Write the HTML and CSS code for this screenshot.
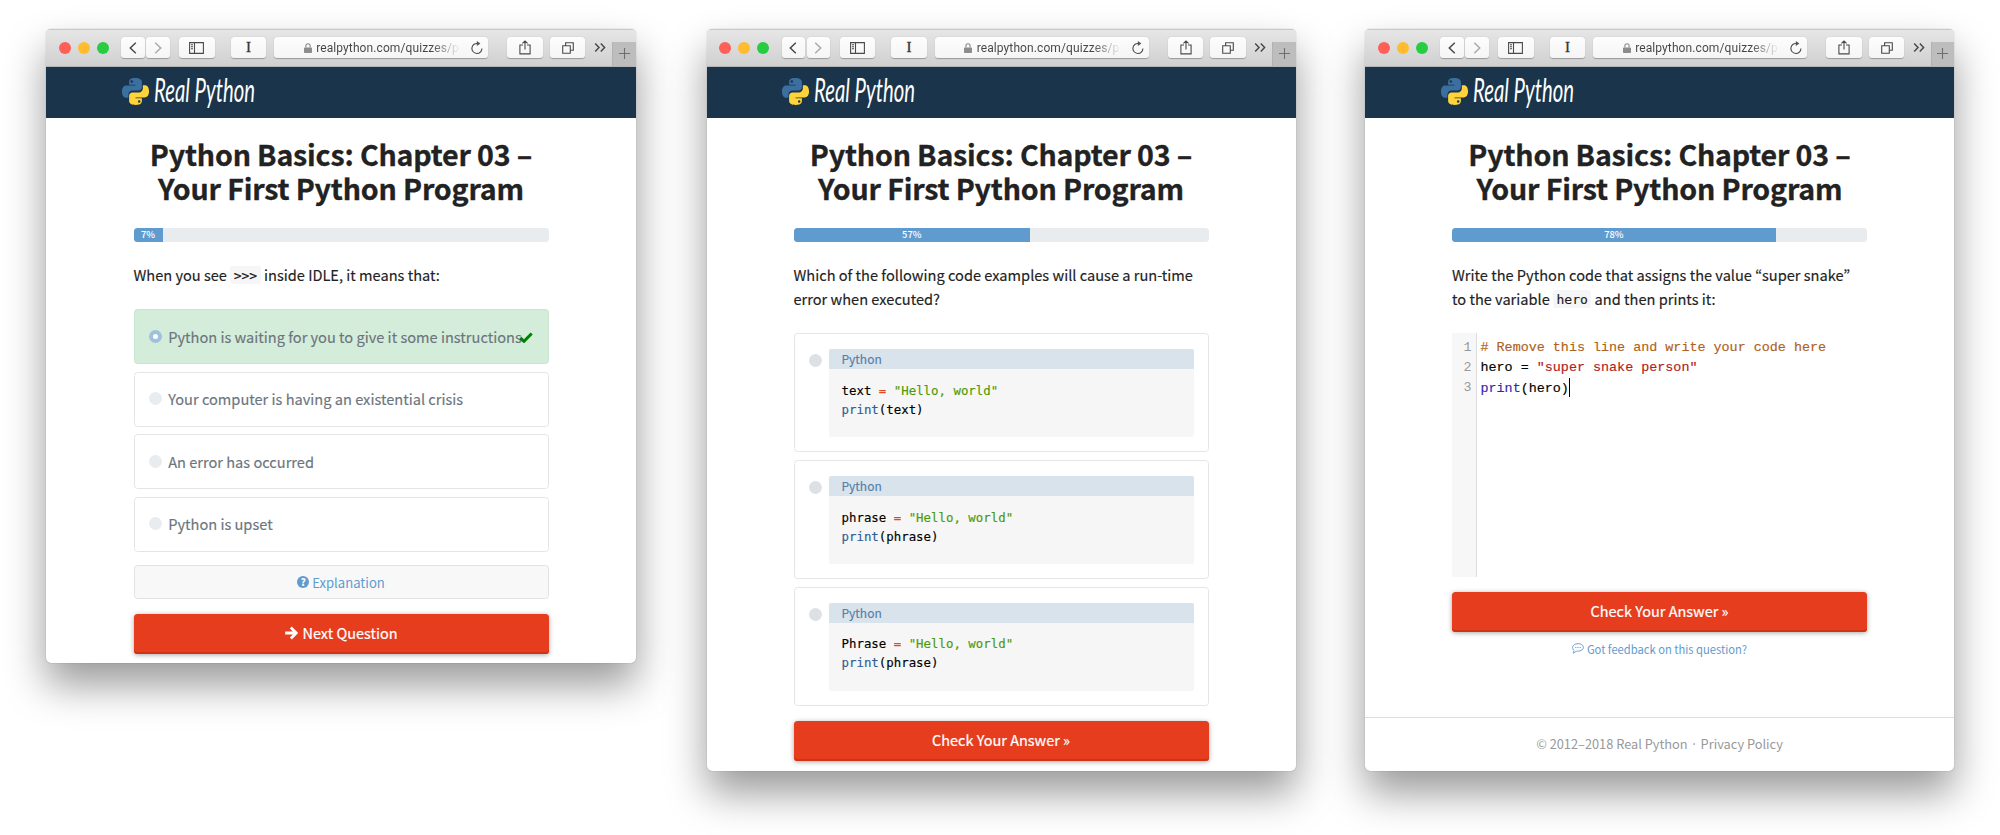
FILE: index.html
```html
<!DOCTYPE html>
<html lang="en">
<head>
  <meta charset="UTF-8" />
  <meta name="viewport" content="width=device-width, initial-scale=1.0" />
  <title>Real Python Quizzes</title>
  <link rel="stylesheet" href="styles.css">
</head>
<body>
  <!-- Shared icons -->
  <svg class="sprite" width="0" height="0">
    <symbol id="i-back" viewBox="0 0 8 12"><path d="M6.8 .8 1.3 6l5.5 5.2" /></symbol>
    <symbol id="i-forward" viewBox="0 0 8 12"><path d="M1.2 .8 6.7 6l-5.5 5.2" /></symbol>
    <symbol id="i-sidebar" viewBox="0 0 15 12"><path d="M.6.6h13.8v10.8H.6zM5.5.6v10.8M2 2.8h2M2 4.8h2M2 6.8h2" /></symbol>
    <symbol id="i-share" viewBox="0 0 12 15"><path d="M4 5H.9v8.9h10.2V5H8M6 9.5V1M3.4 3.4 6 .9l2.6 2.5" /></symbol>
    <symbol id="i-tabs" viewBox="0 0 12 12"><path d="M.7 3.7h7.6v7.6H.7zM3.6 3.5V.7h7.7v7.6H8.5" /></symbol>
    <symbol id="i-more" viewBox="0 0 12 9"><path d="M1.2.6 5 4.5 1.2 8.4M6.8.6l3.8 3.9-3.8 3.9" /></symbol>
    <symbol id="i-plus" viewBox="0 0 11 11"><path d="M5.5 0v11M0 5.5h11" /></symbol>
    <symbol id="i-reload" viewBox="0 0 12 13"><path d="M10.9 7.4A5 5 0 1 1 6.6 2.5" /><path class="solid" d="M5.8 0 9.4 2.6 5.8 5.1z" /></symbol>
    <symbol id="i-lock" viewBox="0 0 8 10"><path class="solid" d="M.8 4.4h6.4q.8 0 .8.8v4q0 .8-.8.8H.8Q0 10 0 9.2v-4q0-.8.8-.8z" /><path d="M1.9 4.6V2.8a2.1 2.1 0 0 1 4.2 0v1.8" /></symbol>
    <symbol id="i-python" viewBox="0 0 110 110">
      <path fill="#3b6fa0" d="M54 0C32 0 29 9 29 16v11h26v4H18C8 31 0 39 0 55s7 25 16 25h10V67c0-9 8-16 16-16h25c8 0 14-6 14-13V16C81 7 73 0 54 0z" />
      <circle cx="40" cy="14" r="5" fill="#1a354b" />
      <path fill="#ffd43b" d="M56 110c22 0 25-9 25-16V83H55v-4h37c10 0 18-8 18-24s-7-25-16-25H85v13c0 9-8 16-16 16H43c-8 0-14 6-14 13v22c0 9 8 16 27 16z" />
      <circle cx="70" cy="96" r="5" fill="#1a354b" />
    </symbol>
    <symbol id="i-check" viewBox="0 0 14 11"><path d="M1.3 5.8 5 9.3 12.7 1.5" /></symbol>
    <symbol id="i-arrow" viewBox="0 0 14 14"><path d="M1.2 7h10.6M6.8 1.6 12.2 7l-5.4 5.4" /></symbol>
    <symbol id="i-comment" viewBox="0 0 12 11"><path d="M6 .6c3 0 5.4 1.7 5.4 3.8S9 8.2 6 8.2c-.6 0-1.1 0-1.6-.2C3.5 9.2 2.3 9.9 1 10c.6-.7 1-1.5 1.1-2.6C1.2 6.7.6 5.6.6 4.4.6 2.3 3 .6 6 .6zM3.2 4.5h1.2M5.4 4.5h1.2M7.6 4.5h1.2" /></symbol>
  </svg>

  <div class="windows">
    <!-- Multiple choice, answered -->
    <div class="window window-answered">
      <div class="toolbar">
        <div class="lights"><i class="red"></i><i class="yellow"></i><i class="green"></i></div>
        <div class="btn nav-btn"><svg width="8" height="12"><use href="#i-back" /></svg></div>
        <div class="btn nav-btn off"><svg width="8" height="12"><use href="#i-forward" /></svg></div>
        <div class="btn sidebar-btn"><svg width="15" height="12"><use href="#i-sidebar" /></svg></div>
        <div class="btn text-btn">I</div>
        <div class="btn address">
          <svg class="lock" width="8" height="10"><use href="#i-lock" /></svg>
          <span class="url">realpython.com/quizzes/p</span>
          <svg width="12" height="13"><use href="#i-reload" /></svg>
        </div>
        <div class="btn share-btn"><svg width="12" height="15"><use href="#i-share" /></svg></div>
        <div class="btn tabs-btn"><svg width="12" height="12"><use href="#i-tabs" /></svg></div>
        <svg class="more" width="12" height="9"><use href="#i-more" /></svg>
        <div class="new-tab"><svg width="11" height="11"><use href="#i-plus" /></svg></div>
      </div>
      <div class="navbar">
        <svg class="logo" width="27" height="27"><use href="#i-python" /></svg>
        <svg class="wordmark" width="106" height="51"><text x="1" y="35" textLength="101" lengthAdjust="spacingAndGlyphs">Real Python</text></svg>
      </div>
      <div class="content">
        <h1>Python Basics: Chapter 03 – Your First Python Program</h1>
        <div class="progress"><div class="bar" style="width: 7%">7%</div></div>
        <p class="question">When you see <code>&gt;&gt;&gt;</code> inside IDLE, it means that:</p>
        <div class="answers">
          <div class="answer correct"><i class="radio"></i>Python is waiting for you to give it some instructions<svg class="check" width="14" height="11"><use href="#i-check" /></svg></div>
          <div class="answer"><i class="radio"></i>Your computer is having an existential crisis</div>
          <div class="answer"><i class="radio"></i>An error has occurred</div>
          <div class="answer"><i class="radio"></i>Python is upset</div>
        </div>
        <div class="explanation"><i class="help">?</i>Explanation</div>
        <div class="submit"><svg width="14" height="14"><use href="#i-arrow" /></svg>Next Question</div>
      </div>
    </div>

    <!-- Multiple choice with code blocks -->
    <div class="window window-code">
      <div class="toolbar">
        <div class="lights"><i class="red"></i><i class="yellow"></i><i class="green"></i></div>
        <div class="btn nav-btn"><svg width="8" height="12"><use href="#i-back" /></svg></div>
        <div class="btn nav-btn off"><svg width="8" height="12"><use href="#i-forward" /></svg></div>
        <div class="btn sidebar-btn"><svg width="15" height="12"><use href="#i-sidebar" /></svg></div>
        <div class="btn text-btn">I</div>
        <div class="btn address">
          <svg class="lock" width="8" height="10"><use href="#i-lock" /></svg>
          <span class="url">realpython.com/quizzes/p</span>
          <svg width="12" height="13"><use href="#i-reload" /></svg>
        </div>
        <div class="btn share-btn"><svg width="12" height="15"><use href="#i-share" /></svg></div>
        <div class="btn tabs-btn"><svg width="12" height="12"><use href="#i-tabs" /></svg></div>
        <svg class="more" width="12" height="9"><use href="#i-more" /></svg>
        <div class="new-tab"><svg width="11" height="11"><use href="#i-plus" /></svg></div>
      </div>
      <div class="navbar">
        <svg class="logo" width="27" height="27"><use href="#i-python" /></svg>
        <svg class="wordmark" width="106" height="51"><text x="1" y="35" textLength="101" lengthAdjust="spacingAndGlyphs">Real Python</text></svg>
      </div>
      <div class="content">
        <h1>Python Basics: Chapter 03 – Your First Python Program</h1>
        <div class="progress"><div class="bar" style="width: 57%">57%</div></div>
        <p class="question">Which of the following code examples will cause a run-time<br>error when executed?</p>
        <div class="answers">
          <div class="answer code-answer">
            <i class="radio"></i>
            <div class="snippet">
              <div class="lang">Python</div>
<pre>text <b class="op">=</b> <b class="str">"Hello, world"</b>
<b class="fn">print</b>(text)</pre>
            </div>
          </div>
          <div class="answer code-answer">
            <i class="radio"></i>
            <div class="snippet">
              <div class="lang">Python</div>
<pre>phrase <b class="op">=</b> <b class="str">"Hello, world"</b>
<b class="fn">print</b>(phrase)</pre>
            </div>
          </div>
          <div class="answer code-answer">
            <i class="radio"></i>
            <div class="snippet">
              <div class="lang">Python</div>
<pre>Phrase <b class="op">=</b> <b class="str">"Hello, world"</b>
<b class="fn">print</b>(phrase)</pre>
            </div>
          </div>
        </div>
        <div class="submit">Check Your Answer »</div>
      </div>
    </div>

    <!-- Code editor question -->
    <div class="window window-editor">
      <div class="toolbar">
        <div class="lights"><i class="red"></i><i class="yellow"></i><i class="green"></i></div>
        <div class="btn nav-btn"><svg width="8" height="12"><use href="#i-back" /></svg></div>
        <div class="btn nav-btn off"><svg width="8" height="12"><use href="#i-forward" /></svg></div>
        <div class="btn sidebar-btn"><svg width="15" height="12"><use href="#i-sidebar" /></svg></div>
        <div class="btn text-btn">I</div>
        <div class="btn address">
          <svg class="lock" width="8" height="10"><use href="#i-lock" /></svg>
          <span class="url">realpython.com/quizzes/p</span>
          <svg width="12" height="13"><use href="#i-reload" /></svg>
        </div>
        <div class="btn share-btn"><svg width="12" height="15"><use href="#i-share" /></svg></div>
        <div class="btn tabs-btn"><svg width="12" height="12"><use href="#i-tabs" /></svg></div>
        <svg class="more" width="12" height="9"><use href="#i-more" /></svg>
        <div class="new-tab"><svg width="11" height="11"><use href="#i-plus" /></svg></div>
      </div>
      <div class="navbar">
        <svg class="logo" width="27" height="27"><use href="#i-python" /></svg>
        <svg class="wordmark" width="106" height="51"><text x="1" y="35" textLength="101" lengthAdjust="spacingAndGlyphs">Real Python</text></svg>
      </div>
      <div class="content">
        <h1>Python Basics: Chapter 03 – Your First Python Program</h1>
        <div class="progress"><div class="bar" style="width: 78%">78%</div></div>
        <p class="question">Write the Python code that assigns the value “super snake”<br>to the variable <code>hero</code> and then prints it:</p>
        <div class="editor">
          <div class="gutter">1<br>2<br>3</div>
<pre><span class="comment"># Remove this line and write your code here</span>
hero = <span class="string">"super snake person"</span>
<span class="builtin">print</span>(hero)<i class="cursor"></i></pre>
        </div>
        <div class="submit">Check Your Answer »</div>
        <div class="feedback"><svg width="12" height="11"><use href="#i-comment" /></svg>Got feedback on this question?</div>
      </div>
      <div class="footer">© 2012–2018 Real Python · Privacy Policy</div>
    </div>
  </div>
</body>
</html>
```
FILE: styles.css
```css
* { box-sizing: border-box; }

body {
  margin: 0;
  background: #fff;
  color: #222;
  font-family: "Noto Sans CJK KR", sans-serif;
  font-size: 14.6px;
  overflow: hidden;
}

.sprite { position: absolute; }
svg { flex: none; }

/* Windows */
.windows {
  display: flex;
  align-items: flex-start;
  gap: 70px;
  height: 835px;
  padding: 29px 0 0 46px;
}
.window {
  flex: none;
  display: flex;
  flex-direction: column;
  width: 590px;
  height: 741.5px;
  border-radius: 5px;
  background: #fff;
  box-shadow: 0 0 1px rgba(0, 0, 0, 0.45), 0 22px 40px rgba(0, 0, 0, 0.4);
  overflow: hidden;
}
.window-answered { height: 633.5px; }
.window-code { width: 589px; margin-left: 0.5px; }
.window-editor { width: 589px; margin-left: -0.5px; }

/* Browser toolbar */
.toolbar {
  display: flex;
  align-items: center;
  flex: none;
  height: 37.5px;
  padding-left: 12.5px;
  background: linear-gradient(#e6e6e6, #d0d0d0);
  border-top: 1px solid #c8c8c8;
  border-bottom: 1px solid #b4b4b4;
}
.toolbar svg { fill: none; stroke: #4a4a4a; stroke-width: 1.1; }
.solid { fill: #555; stroke: none; }
.lights { display: flex; gap: 7.2px; margin-right: 12.3px; }
.lights i { width: 12px; height: 12px; border-radius: 50%; }
.red { background: #ff5f57; }
.yellow { background: #febc2e; }
.green { background: #28cc40; }
.btn {
  display: flex;
  align-items: center;
  justify-content: center;
  flex: none;
  width: 35.5px;
  height: 21px;
  border-radius: 3.5px;
  background: linear-gradient(#fdfdfd, #f5f5f5);
  box-shadow: 0 0.5px 1px rgba(0, 0, 0, 0.28);
}
.nav-btn { width: 23.5px; margin-right: 1.5px; }
.toolbar .nav-btn svg { stroke-width: 1.5; }
.toolbar .off svg { stroke: #aaa; }
.sidebar-btn { margin-left: 8px; }
.text-btn {
  margin-left: 16.2px;
  font-family: "Liberation Serif", serif;
  font-size: 15px;
  color: #333;
  -webkit-text-stroke: 0.3px #333;
}
.address {
  justify-content: flex-start;
  width: 214px;
  margin-left: 7.8px;
  padding-left: 29.5px;
}
.toolbar .lock { stroke: #8c8c8c; }
#i-lock .solid { fill: #8c8c8c; }
.url {
  width: 147px;
  margin-left: 4.5px;
  margin-right: 8px;
  font-family: Roboto, sans-serif;
  font-size: 12px;
  letter-spacing: 0.1px;
  line-height: 20px;
  white-space: nowrap;
  background: linear-gradient(90deg, #444 115px, rgba(68, 68, 68, 0) 144px);
  -webkit-background-clip: text;
  background-clip: text;
  -webkit-text-fill-color: transparent;
}
.share-btn { margin-left: 19.2px; }
.tabs-btn { margin-left: 7px; }
.more { margin-left: 8.5px; }
.toolbar .more { stroke-width: 1.5; }
.new-tab {
  display: flex;
  align-items: center;
  justify-content: center;
  align-self: flex-end;
  height: 24px;
  flex: 1;
  margin-left: 6px;
  background: #bdbdbd;
  border-left: 1px solid #b2b2b2;
}
.toolbar .new-tab svg { stroke: #6e6e6e; }

/* Site header */
.navbar {
  display: flex;
  align-items: center;
  flex: none;
  height: 51.8px;
  padding-left: 75.5px;
  background: #1a354b;
}
.logo { margin-top: -1px; }
.wordmark { margin-left: 4px; overflow: visible; }
.wordmark text {
  fill: #fff;
  font-family: Lato, sans-serif;
  font-size: 33px;
  font-style: italic;
}

/* Quiz */
.content {
  display: flex;
  flex-direction: column;
  flex: 1;
  width: 415px;
  margin: 0 auto;
  padding-top: 18.7px;
}
h1 {
  width: 400px;
  margin: 0 auto 22.5px;
  font-size: 28.6px;
  font-weight: 700;
  letter-spacing: -0.18px;
  line-height: 34.5px;
  text-align: center;
  -webkit-text-stroke: 0.3px;
}
.progress {
  display: flex;
  height: 13.5px;
  border-radius: 3.5px;
  background: #e8ecef;
  overflow: hidden;
}
.bar {
  background: #5f9bcf;
  color: #fff;
  font-size: 9.3px;
  font-weight: 500;
  line-height: 13.5px;
  text-align: center;
}
.question {
  margin: 20.8px 0 22.5px;
  line-height: 24px;
  white-space: nowrap;
  -webkit-text-stroke: 0.15px;
}
.question code {
  position: relative;
  top: -1px;
  padding: 1.5px 3.5px;
  border-radius: 3px;
  background: #f6f6f6;
  font-family: "DejaVu Sans Mono", monospace;
  font-size: 13px;
  line-height: 1;
}
.answers { display: flex; flex-direction: column; gap: 7.5px; }
.answer {
  position: relative;
  display: flex;
  align-items: center;
  height: 55px;
  padding: 0 14px 1px;
  border: 1px solid #e3e6e8;
  border-radius: 3.5px;
  color: #6c757d;
  white-space: nowrap;
  -webkit-text-stroke: 0.15px;
}
.radio {
  flex: none;
  width: 13px;
  height: 13px;
  margin-right: 6.7px;
  border-radius: 50%;
  background: #e8ecef;
}
.correct { background: #d4edda; border-color: #c8e6cf; }
.correct .radio { background: #fff; border: 4px solid #9fc1de; }
.check {
  position: absolute;
  top: 22px;
  right: 15px;
  fill: none;
  stroke: #008000;
  stroke-width: 3;
}
.explanation {
  display: flex;
  align-items: center;
  justify-content: center;
  height: 34px;
  margin-top: 13.5px;
  border: 1px solid #e0e3e5;
  border-radius: 3.5px;
  background: #f8f8f8;
  color: #5f9bcf;
  font-size: 13.1px;
}
.help {
  width: 12px;
  height: 12px;
  margin-right: 3px;
  border-radius: 50%;
  background: #5f9bcf;
  color: #f8f8f8;
  font-size: 10px;
  font-style: normal;
  font-weight: 900;
  line-height: 12px;
  text-align: center;
}
.submit {
  display: flex;
  align-items: center;
  justify-content: center;
  flex: none;
  height: 40px;
  margin-top: 14.8px;
  padding-bottom: 3px;
  border-radius: 3.5px;
  background: #e63d1e;
  box-shadow: inset 0 -2px 0 #cf3313, 0 1px 5px rgba(0, 0, 0, 0.35);
  color: #fff;
  font-size: 14.5px;
  -webkit-text-stroke: 0.2px;
}
.submit svg { margin-right: 4px; fill: none; stroke: #fff; stroke-width: 2.8; }

/* Code answers */
.code-answer { align-items: flex-start; height: 119.2px; padding-top: 15px; }
.code-answer .radio { margin: 5px 7px 0 0; background: #dde1e6; }
.snippet { flex: 1; border-radius: 2px; background: #f6f6f6; overflow: hidden; }
.lang {
  height: 20px;
  padding-left: 13px;
  background: #d9e3eb;
  color: #5580a8;
  font-size: 12px;
  line-height: 19px;
}
pre { margin: 0; }
.snippet pre {
  height: 68px;
  padding: 11.6px 13px 0;
  color: #000;
  font-family: "DejaVu Sans Mono", monospace;
  font-size: 12.4px;
  line-height: 19.2px;
}
.snippet b { font-weight: normal; }
.op { color: #de4a26; }
.str { color: #4e9a06; }
.fn { color: #2f5f93; }

/* Editor */
.editor {
  display: flex;
  height: 244px;
  font-family: "Liberation Mono", monospace;
  font-size: 13.4px;
  line-height: 20px;
}
.gutter {
  width: 24.5px;
  padding: 4.5px 4px 0 0;
  border-right: 1px solid #ddd;
  background: #f7f7f7;
  color: #999;
  text-align: right;
}
.editor pre {
  padding: 4.5px 0 0 4px;
  font-family: inherit;
  color: #000;
  -webkit-text-stroke: 0.15px;
}
.comment { color: #b0611a; }
.string { color: #b3201a; }
.builtin { color: #3a1fb0; }
.cursor {
  display: inline-block;
  width: 1px;
  height: 19px;
  background: #000;
  vertical-align: -5px;
}
.feedback {
  display: flex;
  align-items: center;
  justify-content: center;
  margin-top: 8.5px;
  color: #5f9bcf;
  font-size: 11.2px;
  line-height: 16px;
}
.feedback svg { margin-right: 3px; fill: none; stroke: #5f9bcf; stroke-width: 0.9; }
.footer {
  flex: none;
  height: 54px;
  border-top: 1px solid #ddd;
  color: #999;
  font-size: 12.8px;
  line-height: 52px;
  text-align: center;
}
```
